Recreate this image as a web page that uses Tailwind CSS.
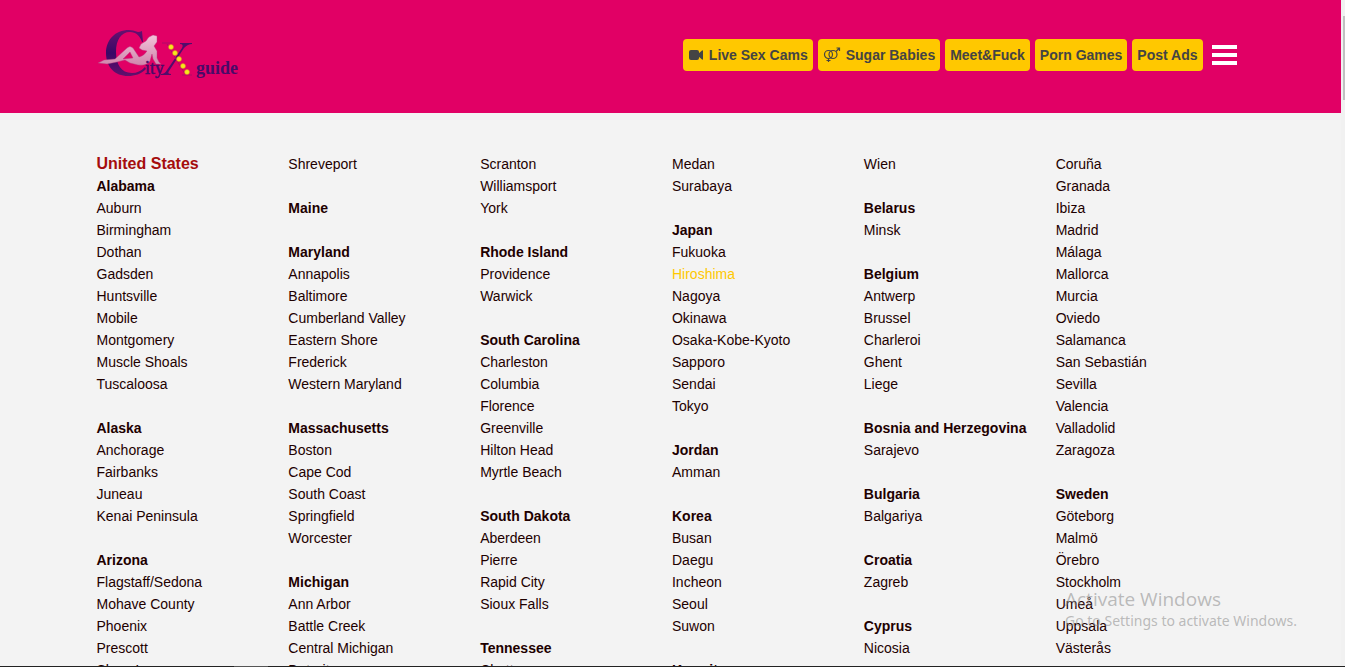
<!DOCTYPE html>
<html lang="en">
<head>
<meta charset="utf-8">
<title>City X Guide</title>
<script src="https://cdn.jsdelivr.net/npm/@tailwindcss/browser@4"></script>
</head>
<body class="relative flex h-screen flex-col overflow-hidden bg-[#f3f3f3] font-['Liberation_Sans',Arial,sans-serif] text-sm text-[#1e0000]">
<div class="flex min-h-0 flex-1">
<div class="flex min-w-0 flex-1 flex-col overflow-hidden">
<header class="shrink-0 bg-[#e10065] pt-7 pb-7">
  <div class="mx-auto flex h-[57px] max-w-[1152px] items-start justify-between pr-2.5 pl-px">
    <a href="#" aria-label="City X guide">
      <svg class="h-[57px] w-[144px]" viewBox="0 0 144 57">
        <defs>
          <linearGradient id="body" x1="0" y1="0" x2="0" y2="1"><stop offset="0" stop-color="#f3c3d9"/><stop offset="1" stop-color="#cf86ac"/></linearGradient>
          <linearGradient id="ink" x1="0" y1="0" x2="0" y2="1"><stop offset="0" stop-color="#67106f"/><stop offset=".5" stop-color="#390866"/><stop offset="1" stop-color="#63106c"/></linearGradient>
        </defs>
        <path fill="url(#ink)" d="M47 14 46 3Q44 4 42 4 37 2 33 2C19 2 10 12 10 25 10 39 19 48 32 48 39 48 45 46 50 41L49 39C45 43 41 45 36 45 25 45 20 36 20 24 20 12 25 4 34 4 40 4 44 8 46 14Z"/>
        <path fill="url(#body)" stroke="#b9377f" stroke-width=".4" d="M2 35 8 32 19 31 31 20Q34 17 37 20L43 29Q48 28 51 23L46 22 43 20 45 16 50 13Q52 10 53 9L57 7 61 8 61 14 58 18 61 23 61 30 63 34 65 36 60 36 57 31 56 26 54 33Q51 38 42 37L34 35 29 32 21 34 11 36ZM27 31 37 30 34 24Z"/>
        <g fill="#4a0a68" font-family="Liberation Serif,serif">
          <text x="49" y="46" font-size="18" stroke="#4a0a68" stroke-width=".5">ity</text>
          <text x="100" y="46" font-size="18" font-weight="bold">guide</text>
        </g>
        <path fill="#510c6b" d="M84 15H96V16Q92 16 88 20L73 43Q71 46 75 46V47H65V46Q69 46 71 42L86 20Q88 16 84 16Z"/>
        <path stroke="#b00868" stroke-width="1" d="M66 15H76M86 47H96M71 16 89 46"/>
        <g fill="#f6e71c" stroke="#d97a23" stroke-width=".5"><circle cx="75" cy="19" r="2.5"/><circle cx="79" cy="25" r="2.5"/><circle cx="83" cy="31" r="2.5"/><circle cx="87" cy="38" r="2.5"/><circle cx="91" cy="44" r="2.5"/></g>
      </svg>
    </a>
    <nav class="mt-[11px] flex items-center gap-[5px] text-sm font-bold text-[#444]">
      <a href="#" class="flex h-8 items-center gap-[5px] rounded bg-[#ffc800] px-[5px]"><svg class="h-3 w-4" viewBox="0 0 16 12" fill="#444"><rect x="1" y="1" width="10" height="10" rx="2"/><path d="M10 5 14 1.500Q15 1 15 2V10Q15 11 14 10.500L10 7Z"/></svg>Live Sex Cams</a>
      <a href="#" class="flex h-8 items-center gap-[5px] rounded bg-[#ffc800] px-[5px]"><svg class="h-4 w-[18px]" viewBox="0 0 18 16" fill="none" stroke="#444" stroke-width="1.2"><circle cx="5.500" cy="7.500" r="4"/><circle cx="10" cy="7.500" r="4"/><path d="M5.500 11.500V15M3.500 13.500H7.500M13 4.500 16.500 1M13.500 1H16.500V4"/></svg>Sugar Babies</a>
      <a href="#" class="flex h-8 items-center rounded bg-[#ffc800] px-[5px]">Meet&amp;Fuck</a>
      <a href="#" class="flex h-8 items-center rounded bg-[#ffc800] px-[5px]">Porn Games</a>
      <a href="#" class="flex h-8 items-center rounded bg-[#ffc800] px-[5px]">Post Ads</a>
      <button type="button" aria-label="Menu" class="ml-1 flex w-[25px] flex-col gap-1"><span class="h-1 bg-white"></span><span class="h-1 bg-white"></span><span class="h-1 bg-white"></span></button>
    </nav>
  </div>
</header>
<main id="cities" class="mx-auto grid w-full max-w-[1154px] grid-cols-6 pt-10 pl-[3px] leading-[22px] whitespace-nowrap"></main>
</div>
<div class="w-1 shrink-0 bg-[#f1f1f1] pt-4 pl-0.5"><div class="h-[84px] bg-[#c1c1c1]"></div></div>
</div>
<div class="flex h-px shrink-0 bg-[#222]"><div class="ml-[234px] w-[34px] bg-[#555]"></div></div>
<aside class="pointer-events-none absolute right-11 bottom-9 w-[236px] whitespace-nowrap text-[#888]/55">
  <p class="font-['Open_Sans',sans-serif] text-[19px] leading-6">Activate Windows</p>
  <p class="font-['Noto_Sans',sans-serif] text-sm leading-5">Go to Settings to activate Windows.</p>
</aside>
<script>
// Columns of groups; within a group the first entry is the bold region name unless it is empty.
const columns = [
 "Alabama,Auburn,Birmingham,Dothan,Gadsden,Huntsville,Mobile,Montgomery,Muscle Shoals,Tuscaloosa|Alaska,Anchorage,Fairbanks,Juneau,Kenai Peninsula|Arizona,Flagstaff/Sedona,Mohave County,Phoenix,Prescott,Show Low",
 ",Shreveport|Maine|Maryland,Annapolis,Baltimore,Cumberland Valley,Eastern Shore,Frederick,Western Maryland|Massachusetts,Boston,Cape Cod,South Coast,Springfield,Worcester|Michigan,Ann Arbor,Battle Creek,Central Michigan,Detroit",
 ",Scranton,Williamsport,York|Rhode Island,Providence,Warwick|South Carolina,Charleston,Columbia,Florence,Greenville,Hilton Head,Myrtle Beach|South Dakota,Aberdeen,Pierre,Rapid City,Sioux Falls|Tennessee,Chattanooga",
 ",Medan,Surabaya|Japan,Fukuoka,Hiroshima,Nagoya,Okinawa,Osaka-Kobe-Kyoto,Sapporo,Sendai,Tokyo|Jordan,Amman|Korea,Busan,Daegu,Incheon,Seoul,Suwon|Kuwait",
 ",Wien|Belarus,Minsk|Belgium,Antwerp,Brussel,Charleroi,Ghent,Liege|Bosnia and Herzegovina,Sarajevo|Bulgaria,Balgariya|Croatia,Zagreb|Cyprus,Nicosia",
 ",Coruña,Granada,Ibiza,Madrid,Málaga,Mallorca,Murcia,Oviedo,Salamanca,San Sebastián,Sevilla,Valencia,Valladolid,Zaragoza|Sweden,Göteborg,Malmö,Örebro,Stockholm,Umeå,Uppsala,Västerås"
];
document.getElementById("cities").innerHTML = columns.map((col, i) =>
  '<section class="flex min-w-0 flex-col gap-[22px]">' + col.split("|").map((g, j) => {
    const [name, ...cities] = g.split(",");
    return "<div>" + (i + j === 0 ? '<h2 class="text-base leading-[22px] font-bold text-[#a50d0d]">United States</h2>' : "") +
      (name ? '<h3 class="font-bold">' + name + "</h3>" : "") +
      "<ul>" + cities.map(c => '<li><a href="#" class="' + (c === "Hiroshima" ? "text-[#ffc800]" : "hover:text-[#ffc800]") + '">' + c + "</a></li>").join("") + "</ul></div>";
  }).join("") + "</section>").join("");
</script>
</body>
</html>
